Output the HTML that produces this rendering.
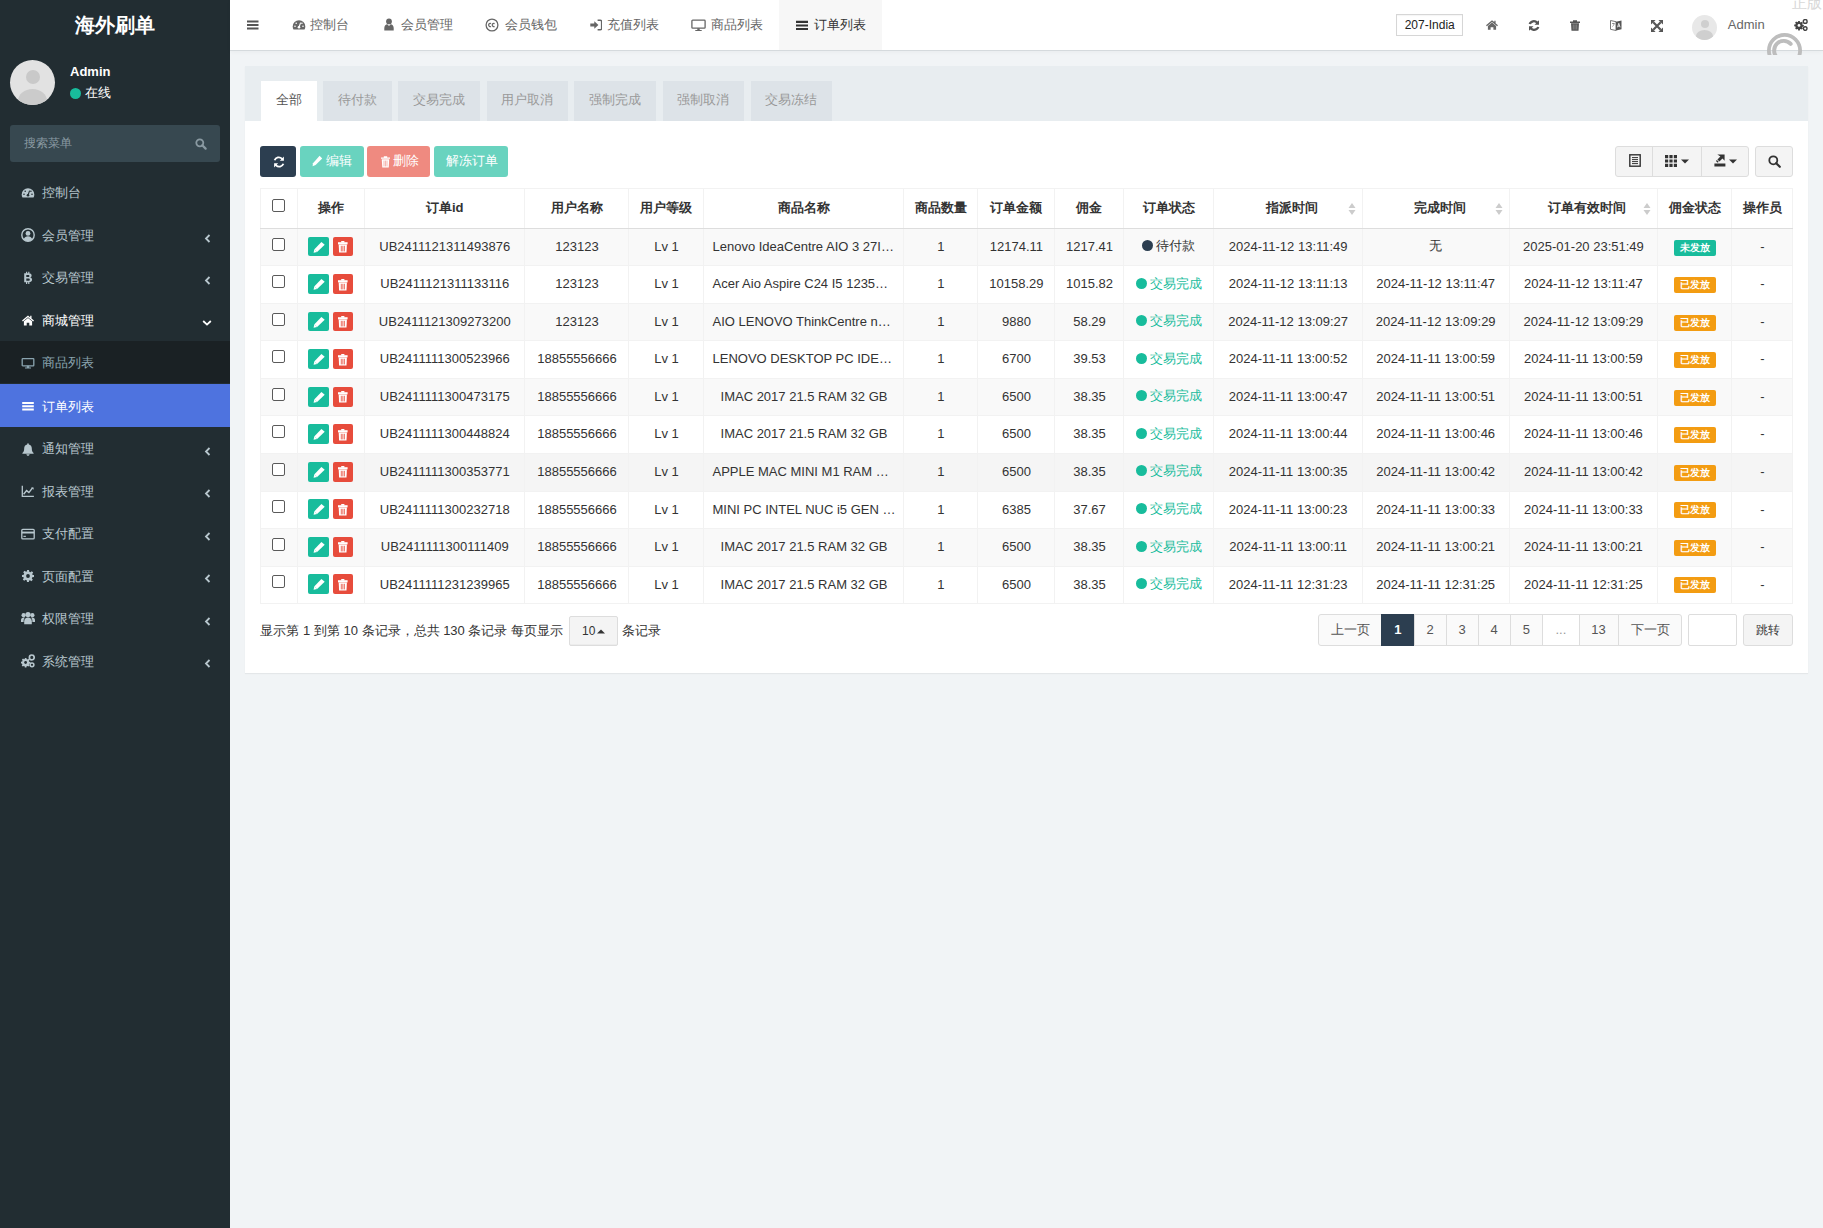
<!DOCTYPE html>
<html><head><meta charset="utf-8">
<style>
*{box-sizing:border-box;margin:0;padding:0}
html,body{width:1823px;height:1228px;overflow:hidden;background:#f1f4f6;font-family:"Liberation Sans",sans-serif;font-size:13px;color:#333}
.a{position:absolute}
svg{display:block}
#sb{position:absolute;left:0;top:0;width:230px;height:1228px;background:#222d32}
#logo{position:absolute;left:0;top:9px;width:230px;text-align:center;color:#fff;font-size:20px;font-weight:bold;line-height:32px}
.av{border-radius:50%;background:#e4e4e4;overflow:hidden}
.mi{position:absolute;left:0;width:230px;height:42.55px;color:#b8c7ce;font-size:13px}
.mi .t{position:absolute;left:42px;top:1.8px;line-height:42.55px}
.mi .ic{position:absolute;left:21px;top:15.2px}
.mi .ch{position:absolute;left:204px;top:20.5px}
#nav{position:absolute;left:230px;top:0;width:1593px;height:51px;background:#fff;border-bottom:1px solid #d5dadd;box-shadow:0 1px 4px rgba(0,0,0,.04)}
.nt{position:absolute;top:0;height:50px;line-height:49px;color:#666;font-size:13px}

#panel{position:absolute;left:245px;top:66px;width:1563px;height:607px;background:#fff;border-radius:0;box-shadow:0 1px 1px rgba(0,0,0,.05)}
#ph{position:absolute;left:0;top:0;width:1563px;height:55px;background:#e8edf0}
.tab{position:absolute;top:15px;height:40px;line-height:37px;text-align:center;background:#dde3e8;color:#999;font-size:13px}
.btn{position:absolute;top:80px;height:31px;border-radius:3px;color:#fff;font-size:13px;line-height:31px;text-align:center}
table{position:absolute;left:15px;top:121.5px;border-collapse:collapse;table-layout:fixed;width:1532.5px}
td,th{border:1px solid #f2f2f2;text-align:center;white-space:nowrap;overflow:hidden;text-overflow:ellipsis;font-size:13px;color:#333;padding:0 8px}
th{height:40.4px;font-weight:bold;border-bottom:1px solid #ddd}
td{height:37.52px;padding-bottom:1.5px}
tr.odd td{background:#f9f9f9}
tr.hov td{background:#f5f5f5}
.cb{display:inline-block;width:13px;height:13px;border:1px solid #5a5a5a;border-radius:2px;background:#fff;vertical-align:middle}
.eb{position:relative;display:inline-block;width:21.5px;height:19.6px;border-radius:2px;background:#18bc9c;vertical-align:middle;margin-right:4.2px;margin-left:-1px;margin-top:-1px}
.db{position:relative;display:inline-block;width:19.4px;height:19.6px;border-radius:2px;background:#e74c3c;vertical-align:middle;margin-top:-1px}
.dot{display:inline-block;width:11px;height:11px;border-radius:50%;vertical-align:-1px;margin-right:3px}
.lb{position:relative;top:1px;display:inline-block;height:16px;line-height:16px;padding:0 5.8px;font-size:9.75px;font-weight:bold;color:#fff;border-radius:2px;vertical-align:middle}
.sort{position:absolute;right:6px;top:13px}
.pg{position:absolute;top:548px;height:32px;line-height:30px;text-align:center;border:1px solid #ddd;background:#fafafa;color:#555;font-size:13px}
</style></head><body>
<div id="sb">
  <div id="logo">海外刷单</div>
  <div class="a av" style="left:10px;top:60px;width:45px;height:45px;background:#e2e2e2"><div class="a" style="left:15.5px;top:10px;width:14px;height:14px;border-radius:50%;background:#c9c9c9"></div><div class="a" style="left:8px;top:29px;width:29px;height:24px;border-radius:50%;background:#cbcbcb"></div></div>
  <div class="a" style="left:70px;top:62.5px;color:#fff;font-weight:bold;font-size:13px;line-height:18px">Admin</div>
  <div class="a" style="left:70px;top:88px;width:11px;height:11px;border-radius:50%;background:#18bc9c"></div>
  <div class="a" style="left:85px;top:84px;color:#fff;font-size:13px;line-height:18px">在线</div>
  <div class="a" style="left:10px;top:125px;width:210px;height:37px;background:#374850;border-radius:3px"></div>
  <div class="a" style="left:24px;top:135px;color:#8a9aa2;font-size:12px;line-height:16px">搜索菜单</div>

  <div class="a" style="left:195px;top:138px"><svg width="12" height="12" viewBox="0 0 12 12"><circle cx="4.8" cy="4.8" r="3.5" fill="none" stroke="#8a9aa2" stroke-width="1.8"/><path d="M7.3 7.3L10.6 10.6" stroke="#8a9aa2" stroke-width="2.2" stroke-linecap="round"/></svg></div>
  <div class="mi" style="top:170.70px;color:#b8c7ce"><div class="ic"><svg width="14" height="14" viewBox="0 0 14 14"><path d="M7 2.2A6.3 6.3 0 0 0 0.7 8.5c0 1.2.3 2.2.8 3.1h11c.5-.9.8-1.9.8-3.1A6.3 6.3 0 0 0 7 2.2z" fill="#b8c7ce"/><circle cx="7" cy="9.3" r="1.3" fill="#222d32"/><path d="M7 9.3L8.6 4.6" stroke="#222d32" stroke-width="1.1"/><circle cx="3" cy="8.2" r=".8" fill="#222d32"/><circle cx="4.2" cy="5.2" r=".8" fill="#222d32"/><circle cx="11" cy="8.2" r=".8" fill="#222d32"/><circle cx="9.9" cy="5.2" r=".8" fill="#222d32"/></svg></div><div class="t">控制台</div></div>
  <div class="mi" style="top:213.16px;color:#b8c7ce"><div class="ic"><svg width="14" height="14" viewBox="0 0 14 14"><circle cx="7" cy="7" r="6.2" fill="none" stroke="#b8c7ce" stroke-width="1.4"/><circle cx="7" cy="5.4" r="2.4" fill="#b8c7ce"/><path d="M2.6 11.2c.9-2 2.5-3 4.4-3s3.5 1 4.4 3c-1.1 1.2-2.7 1.9-4.4 1.9s-3.3-.7-4.4-1.9z" fill="#b8c7ce"/></svg></div><div class="t">会员管理</div><div class="ch"><svg width="8" height="9" viewBox="0 0 8 9" class="chev"><path d="M5.5 1L2 4.5 5.5 8" fill="none" stroke="#b8c7ce" stroke-width="1.8"/></svg></div></div>
  <div class="mi" style="top:255.62px;color:#b8c7ce"><div class="ic"><svg width="14" height="14" viewBox="0 0 14 14"><path d="M3.2 2.2h4.4c1.9 0 3 .9 3 2.3 0 .9-.5 1.6-1.3 1.9 1.1.3 1.8 1.1 1.8 2.2 0 1.7-1.3 2.7-3.3 2.7H3.2zM5.3 3.9v2h2c.7 0 1.1-.4 1.1-1s-.4-1-1.1-1zm0 3.6v2.3h2.2c.8 0 1.3-.4 1.3-1.15s-.5-1.15-1.3-1.15zM5 .8h1.2v1.6H5zm2.2 0h1.2v1.6H7.2zM5 11.1h1.2v1.8H5zm2.2 0h1.2v1.8H7.2z" fill="#b8c7ce"/></svg></div><div class="t">交易管理</div><div class="ch"><svg width="8" height="9" viewBox="0 0 8 9" class="chev"><path d="M5.5 1L2 4.5 5.5 8" fill="none" stroke="#b8c7ce" stroke-width="1.8"/></svg></div></div>
  <div class="mi" style="top:298.08px;color:#fff"><div class="ic"><svg width="14" height="14" viewBox="0 0 14 14"><path d="M7 2.5L1 7.6l.9 1L7 4.3l5.1 4.3.9-1L10.5 5.5V2.8H9.2v1.6z" fill="#fff"/><path d="M2.9 8.3L7 4.9l4.1 3.4v4.3H8.3V9.8H5.7v2.8H2.9z" fill="#fff"/></svg></div><div class="t">商城管理</div><div class="ch" style="left:202px;top:20.5px"><svg width="10" height="8" viewBox="0 0 10 8"><path d="M1.2 2L5 5.6 8.8 2" fill="none" stroke="#fff" stroke-width="1.8"/></svg></div></div>
  <div class="mi" style="top:340.54px;background:#1a2124;color:#8aa4af"><div class="ic"><svg width="14" height="14" viewBox="0 0 14 14"><rect x="1.2" y="2.6" width="11.6" height="7.2" rx=".6" fill="none" stroke="#8aa4af" stroke-width="1.3"/><path d="M5.8 9.8v1.6H4v1.1h6v-1.1H8.2V9.8" fill="#8aa4af"/></svg></div><div class="t">商品列表</div></div>
  <div class="mi" style="top:384.00px;background:#4e73df;color:#fff"><div class="ic"><svg width="14" height="14" viewBox="0 0 14 14"><path d="M1.2 3h11.6v2H1.2zm0 3.2h11.6v2H1.2zm0 3.2h11.6v2H1.2z" fill="#fff"/></svg></div><div class="t">订单列表</div></div>
  <div class="mi" style="top:426.46px;color:#b8c7ce"><div class="ic"><svg width="14" height="14" viewBox="0 0 14 14"><path d="M7 1.2c.5 0 .8.3.8.8v.4c1.9.4 3 1.9 3 3.9 0 2.6.6 3.8 1.8 4.6v.8H1.4v-.8c1.2-.8 1.8-2 1.8-4.6 0-2 1.1-3.5 3-3.9V2c0-.5.3-.8.8-.8zM5.4 12.2h3.2c0 .9-.7 1.5-1.6 1.5s-1.6-.6-1.6-1.5z" fill="#b8c7ce"/></svg></div><div class="t">通知管理</div><div class="ch"><svg width="8" height="9" viewBox="0 0 8 9" class="chev"><path d="M5.5 1L2 4.5 5.5 8" fill="none" stroke="#b8c7ce" stroke-width="1.8"/></svg></div></div>
  <div class="mi" style="top:468.92px;color:#b8c7ce"><div class="ic"><svg width="14" height="14" viewBox="0 0 14 14"><path d="M1.3 1.8v10.5h11.6" fill="none" stroke="#b8c7ce" stroke-width="1.3"/><path d="M2.6 10.2l3-3.6 2.3 2 3.7-4.8" fill="none" stroke="#b8c7ce" stroke-width="1.4"/><path d="M10.2 3.4h2.4v2.4z" fill="#b8c7ce"/></svg></div><div class="t">报表管理</div><div class="ch"><svg width="8" height="9" viewBox="0 0 8 9" class="chev"><path d="M5.5 1L2 4.5 5.5 8" fill="none" stroke="#b8c7ce" stroke-width="1.8"/></svg></div></div>
  <div class="mi" style="top:511.38px;color:#b8c7ce"><div class="ic"><svg width="14" height="14" viewBox="0 0 14 14"><rect x="0.8" y="2.3" width="12.4" height="9.6" rx="1" fill="none" stroke="#b8c7ce" stroke-width="1.3"/><rect x="0.8" y="4.6" width="12.4" height="1.9" fill="#b8c7ce"/><rect x="2.4" y="8.8" width="2.5" height="1.1" fill="#b8c7ce"/></svg></div><div class="t">支付配置</div><div class="ch"><svg width="8" height="9" viewBox="0 0 8 9" class="chev"><path d="M5.5 1L2 4.5 5.5 8" fill="none" stroke="#b8c7ce" stroke-width="1.8"/></svg></div></div>
  <div class="mi" style="top:553.84px;color:#b8c7ce"><div class="ic"><svg width="14" height="14" viewBox="0 0 14 14"><path d="M6 1h2l.3 1.7 1.1.5 1.4-1 1.4 1.4-1 1.4.5 1.1L13 6v2l-1.7.3-.5 1.1 1 1.4-1.4 1.4-1.4-1-1.1.5L8 13H6l-.3-1.7-1.1-.5-1.4 1-1.4-1.4 1-1.4-.5-1.1L1 8V6l1.7-.3.5-1.1-1-1.4 1.4-1.4 1.4 1 1.1-.5z" fill="#b8c7ce"/><circle cx="7" cy="7" r="1.9" fill="#222d32"/></svg></div><div class="t">页面配置</div><div class="ch"><svg width="8" height="9" viewBox="0 0 8 9" class="chev"><path d="M5.5 1L2 4.5 5.5 8" fill="none" stroke="#b8c7ce" stroke-width="1.8"/></svg></div></div>
  <div class="mi" style="top:596.30px;color:#b8c7ce"><div class="ic"><svg width="14" height="14" viewBox="0 0 14 14"><circle cx="7" cy="3.6" r="2.6" fill="#b8c7ce"/><circle cx="2.6" cy="4.2" r="2.1" fill="#b8c7ce"/><circle cx="11.4" cy="4.2" r="2.1" fill="#b8c7ce"/><path d="M3.2 13.2v-3c0-2.2 1.7-3.6 3.8-3.6s3.8 1.4 3.8 3.6v3z" fill="#b8c7ce"/><path d="M0 11V9.2c0-1.8 1.1-2.7 2.6-2.7.6 0 1 .1 1.4.3-.9.7-1.4 1.8-1.4 3.2V11zM14 11V9.2c0-1.8-1.1-2.7-2.6-2.7-.6 0-1 .1-1.4.3.9.7 1.4 1.8 1.4 3.2V11z" fill="#b8c7ce"/></svg></div><div class="t">权限管理</div><div class="ch"><svg width="8" height="9" viewBox="0 0 8 9" class="chev"><path d="M5.5 1L2 4.5 5.5 8" fill="none" stroke="#b8c7ce" stroke-width="1.8"/></svg></div></div>
  <div class="mi" style="top:638.76px;color:#b8c7ce"><div class="ic"><svg width="14" height="14" viewBox="0 0 14 14"><path d="M3.8 3.9h1.6l.2 1.2.8.4 1-.7 1.1 1.1-.7 1 .4.8 1.2.2v1.6l-1.2.2-.4.8.7 1-1.1 1.1-1-.7-.8.4-.2 1.2H3.8l-.2-1.2-.8-.4-1 .7-1.1-1.1.7-1-.4-.8L0 9.3V7.7l1.2-.2.4-.8-.7-1L2 4.6l1 .7.8-.4z" fill="#b8c7ce"/><circle cx="4.6" cy="8.5" r="1.4" fill="#222d32"/><circle cx="10.8" cy="3.4" r="2.4" fill="none" stroke="#b8c7ce" stroke-width="1.7"/><circle cx="11" cy="10.8" r="1.9" fill="none" stroke="#b8c7ce" stroke-width="1.5"/></svg></div><div class="t">系统管理</div><div class="ch"><svg width="8" height="9" viewBox="0 0 8 9" class="chev"><path d="M5.5 1L2 4.5 5.5 8" fill="none" stroke="#b8c7ce" stroke-width="1.8"/></svg></div></div>
</div>
<div id="nav">
  <div class="a" style="left:17px;top:20px"><svg width="12" height="10" viewBox="0 0 12 10"><path d="M0 0.5h11.5v2H0zm0 3.5h11.5v2H0zm0 3.5h11.5v2H0z" fill="#555"/></svg></div>
  <div class="a" style="left:61.8px;top:18px"><svg width="14" height="14" viewBox="0 0 14 14"><path d="M7 2.2A6.3 6.3 0 0 0 0.7 8.5c0 1.2.3 2.2.8 3.1h11c.5-.9.8-1.9.8-3.1A6.3 6.3 0 0 0 7 2.2z" fill="#666"/><circle cx="7" cy="9.3" r="1.3" fill="#fff"/><path d="M7 9.3L8.6 4.6" stroke="#fff" stroke-width="1.1"/><circle cx="3" cy="8.2" r=".8" fill="#fff"/><circle cx="4.2" cy="5.2" r=".8" fill="#fff"/><circle cx="11" cy="8.2" r=".8" fill="#fff"/><circle cx="9.9" cy="5.2" r=".8" fill="#fff"/></svg></div>
  <div class="nt" style="left:80px">控制台</div>
  <div class="a" style="left:154px;top:18px"><svg width="10" height="13" viewBox="0 0 10 13"><circle cx="5" cy="3.4" r="2.9" fill="#666"/><path d="M0.3 12.4V10c0-2.3 1.6-3.6 3-3.8L5 8l1.7-1.8c1.4.2 3 1.5 3 3.8v2.4z" fill="#666"/></svg></div>
  <div class="nt" style="left:171.4px">会员管理</div>
  <div class="a" style="left:255px;top:18px"><svg width="14" height="14" viewBox="0 0 14 14"><circle cx="7" cy="7" r="5.9" fill="none" stroke="#666" stroke-width="1.3"/><path d="M6 5.6a1.6 1.6 0 1 0 0 2.8M9.6 5.6a1.6 1.6 0 1 0 0 2.8" fill="none" stroke="#666" stroke-width="1.2"/></svg></div>
  <div class="nt" style="left:274.5px">会员钱包</div>
  <div class="a" style="left:359.8px;top:19px"><svg width="12" height="12" viewBox="0 0 12 12"><path d="M0.3 4.6h4V2.3L8.4 6 4.3 9.7V7.4h-4z" fill="#666"/><path d="M7.6 1.2h2.6c.8 0 1.4.6 1.4 1.4v6.8c0 .8-.6 1.4-1.4 1.4H7.6" fill="none" stroke="#666" stroke-width="1.4"/></svg></div>
  <div class="nt" style="left:377.4px">充值列表</div>
  <div class="a" style="left:461px;top:18.5px"><svg width="15" height="13" viewBox="0 0 15 13"><rect x="0.9" y="1.2" width="13.2" height="8" rx=".8" fill="none" stroke="#666" stroke-width="1.3"/><path d="M6.3 9.2v1.8H4.3v1.1h6.4v-1.1H8.7V9.2" fill="#666"/></svg></div>
  <div class="nt" style="left:481px">商品列表</div>
  <div class="a" style="left:548.8px;top:0;width:103px;height:50px;background:#f7f7f7"></div>
  <div class="a" style="left:566px;top:19.5px"><svg width="12" height="11" viewBox="0 0 12 11"><path d="M0 0.8h12v2.1H0zm0 3.6h12v2.1H0zm0 3.6h12v2.1H0z" fill="#333"/></svg></div>
  <div class="nt" style="left:584px;color:#333">订单列表</div>

  <div class="a" style="left:1166.3px;top:14.2px;width:66.3px;height:21.5px;border:1px solid #d6d6d6;background:#fff;box-shadow:inset 0 1px 1px rgba(0,0,0,.04)"></div>
  <div class="a" style="left:1174.7px;top:14px;line-height:22px;font-size:12px;color:#222">207-India</div>
  <div class="a" style="left:1256px;top:20px"><svg width="12" height="10" viewBox="0 0 12 10"><path d="M6 0.2L0 5.2l.9 1L6 1.9l5.1 4.3.9-1L9.6 3.2V0.8H8.3v1.3z" fill="#666"/><path d="M1.9 5.9L6 2.5l4.1 3.4v3.9H7.4V7.3H4.6v2.5H1.9z" fill="#666"/></svg></div>
  <div class="a" style="left:1298px;top:20px"><svg width="12" height="11" viewBox="0 0 12 11"><path d="M11 0.3v4.5H6.5l1.6-1.6A3.4 3.4 0 0 0 2.8 4.3L.6 3.7A5.6 5.6 0 0 1 9.7 1.6z" fill="#555"/><path d="M1 10.7V6.2h4.5L3.9 7.8a3.4 3.4 0 0 0 5.3-1.1l2.2.6a5.6 5.6 0 0 1-9.1 2.1z" fill="#555"/></svg></div>
  <div class="a" style="left:1340px;top:20px"><svg width="10" height="11" viewBox="0 0 10 11"><path d="M0 1.5h10v1.6H0zM3 0.2h4v1.8H3z" fill="#555"/><path d="M1 3.3h8l-.5 7.5H1.5z" fill="#555"/><path d="M3.3 4.5v5M5 4.5v5M6.7 4.5v5" stroke="#999" stroke-width=".7"/></svg></div>
  <div class="a" style="left:1380.4px;top:19px"><svg width="12" height="13" viewBox="0 0 12 13"><path d="M0.5 1.5l5.5 1.2v8.8L0.5 10.3z" fill="none" stroke="#777" stroke-width="1"/><path d="M6 2.7l5.5-1.2v8.8L6 11.5z" fill="#555"/><path d="M7.5 8.3l1.3-4 1.3 4M7.9 7.1h1.8" fill="none" stroke="#fff" stroke-width=".8"/><path d="M2 4.5h2.6M3.3 4v1M2.3 7.5c1-.6 1.8-1.6 2-3" fill="none" stroke="#777" stroke-width=".7"/></svg></div>
  <div class="a" style="left:1420.7px;top:19.6px"><svg width="12" height="12" viewBox="0 0 12 12"><path d="M2.3 2.3L9.7 9.7M9.7 2.3L2.3 9.7" stroke="#555" stroke-width="2.2"/><path d="M0 0h4.6L0 4.6zM12 0v4.6L7.4 0zM12 12H7.4L12 7.4zM0 12V7.4L4.6 12z" fill="#555"/></svg></div>
  <div class="a av" style="left:1462px;top:14.7px;width:25px;height:25px;background:#e8e8e8"><div class="a" style="left:8.5px;top:5px;width:8px;height:8px;border-radius:50%;background:#cfcfcf"></div><div class="a" style="left:4px;top:15px;width:17px;height:12px;border-radius:50%;background:#cfcfcf"></div></div>
  <div class="a" style="left:1497.8px;top:16px;line-height:18px;font-size:13px;color:#666">Admin</div>
  <div class="a" style="left:1563.8px;top:19px"><svg width="14" height="12" viewBox="0 0 14 12"><path d="M3.8 2.7h1.6l.2 1.2.8.4 1-.7 1.1 1.1-.7 1 .4.8 1.2.2v1.6l-1.2.2-.4.8.7 1-1.1 1.1-1-.7-.8.4-.2 1.2H3.8l-.2-1.2-.8-.4-1 .7L.7 10l.7-1-.4-.8L-.2 8V6.4L1 6.2l.4-.8-.7-1 1.1-1.1 1 .7.8-.4z" fill="#444" transform="translate(.4 -.8)"/><circle cx="5" cy="6.4" r="1.4" fill="#fff"/><circle cx="11.2" cy="2.4" r="1.9" fill="none" stroke="#444" stroke-width="1.4"/><circle cx="11.2" cy="9.6" r="1.8" fill="none" stroke="#444" stroke-width="1.4"/></svg></div>
  <div class="a" style="left:1562px;top:-6.5px;font-size:15px;line-height:18px;color:#d8d8d8;letter-spacing:0">正版</div>
  <div class="a" style="left:1537px;top:33px;width:35px;height:22px;overflow:visible"><svg width="35" height="22" viewBox="0 0 35 22" style="overflow:hidden"><circle cx="17.5" cy="17.5" r="15.6" fill="none" stroke="#bdbdbd" stroke-width="3.8"/><path d="M23.67 10.9A9.6 9.6 0 1 0 23.67 24.1" fill="none" stroke="#bdbdbd" stroke-width="3.9" stroke-linecap="round"/></svg></div>
</div>
<div id="panel">
  <div id="ph">
    <div class="tab" style="left:16px;width:56.3px;background:#fff;color:#555">全部</div>
    <div class="tab" style="left:78.4px;width:68.3px">待付款</div>
    <div class="tab" style="left:153.4px;width:81.3px">交易完成</div>
    <div class="tab" style="left:241.5px;width:81.5px">用户取消</div>
    <div class="tab" style="left:329.2px;width:81.8px">强制完成</div>
    <div class="tab" style="left:417.6px;width:81.2px">强制取消</div>
    <div class="tab" style="left:505.9px;width:81.1px">交易冻结</div>
  </div>
  <div class="btn" style="left:15px;width:36px;background:#2c3e50"></div>
  <div class="a" style="left:27.5px;top:89.5px"><svg width="12" height="12" viewBox="0 0 12 12"><path d="M10.9 0.6v4.1H6.8l1.5-1.5A3.6 3.6 0 0 0 2.5 4.4L.7 3.9A5.5 5.5 0 0 1 9.6 2z" fill="#fff"/><path d="M1.1 11.4V7.3h4.1L3.7 8.8a3.6 3.6 0 0 0 5.8-1.2l1.8.5A5.5 5.5 0 0 1 2.4 10z" fill="#fff"/></svg></div>
  <div class="btn" style="left:55px;width:63.8px;background:#18bc9c;opacity:.65"></div>
  <div class="a" style="left:67px;top:89px"><svg width="11" height="12" viewBox="0 0 11 12"><path d="M7.6 0.8l2.6 2.6-6.6 6.6L.6 11.2 1 8.2z" fill="#fff"/></svg></div>
  <div class="a" style="left:81px;top:79.5px;line-height:29px;color:#fff">编辑</div>
  <div class="btn" style="left:122.1px;width:62.9px;background:#e74c3c;opacity:.65"></div>
  <div class="a" style="left:135.5px;top:89.5px"><svg width="9" height="12" viewBox="0 0 9 12"><path d="M0 1.6h9v1.2H0zM2.8 0.2h3.4v1.6H2.8z" fill="#fff"/><path d="M.8 3.3h7.4l-.5 8.3H1.3z" fill="#fff"/><path d="M3 4.6v5.8M4.5 4.6v5.8M6 4.6v5.8" stroke="#f09b92" stroke-width=".7"/></svg></div>
  <div class="a" style="left:147.5px;top:79.5px;line-height:29px;color:#fff">删除</div>
  <div class="btn" style="left:189px;width:73.8px;background:#18bc9c;opacity:.65"></div>
  <div class="a" style="left:201.3px;top:79.5px;line-height:29px;color:#fff">解冻订单</div>
  <div class="a" style="left:1370.3px;top:80px;width:134.2px;height:30.5px;border:1px solid #ddd;border-radius:3px;background:#f4f4f4"></div>
  <div class="a" style="left:1407px;top:80px;width:1px;height:30.5px;background:#ddd"></div>
  <div class="a" style="left:1456px;top:80px;width:1px;height:30.5px;background:#ddd"></div>
  <div class="a" style="left:1510px;top:80px;width:37.6px;height:30.5px;border:1px solid #ddd;border-radius:3px;background:#f4f4f4"></div>
  <div class="a" style="left:1384px;top:87.8px"><svg width="12" height="13" viewBox="0 0 12 13"><rect x="0.8" y="0.8" width="10.4" height="11.4" fill="none" stroke="#333" stroke-width="1.4"/><path d="M3 3.6h6M3 5.6h6M3 7.6h6M3 9.6h6" stroke="#333" stroke-width="1"/></svg></div>
  <div class="a" style="left:1419.8px;top:88.6px"><svg width="12" height="12" viewBox="0 0 12 12"><path d="M0 0h3.2v3.2H0zm4.4 0h3.2v3.2H4.4zm4.4 0H12v3.2H8.8zM0 4.4h3.2v3.2H0zm4.4 0h3.2v3.2H4.4zm4.4 0H12v3.2H8.8zM0 8.8h3.2V12H0zm4.4 0h3.2V12H4.4zm4.4 0H12V12H8.8z" fill="#333"/></svg></div>
  <div class="a" style="left:1436px;top:92.5px"><svg width="8" height="5" viewBox="0 0 8 5"><path d="M0 0.5h8L4 4.6z" fill="#333"/></svg></div>
  <div class="a" style="left:1468.5px;top:87.5px"><svg width="12" height="13" viewBox="0 0 12 13"><path d="M0.4 9.5h11v3H.4z" fill="#333"/><path d="M3.3 0.4h7.3v6.3L8.5 4.6 5.4 7.6 3.4 5.6 6.4 2.5z" fill="#333"/><path d="M2.4 6.5l1.8 1.8" stroke="#333" stroke-width="1.3"/></svg></div>
  <div class="a" style="left:1484px;top:92.5px"><svg width="8" height="5" viewBox="0 0 8 5"><path d="M0 0.5h8L4 4.6z" fill="#333"/></svg></div>
  <div class="a" style="left:1523px;top:88.5px"><svg width="13" height="13" viewBox="0 0 13 13"><circle cx="5.3" cy="5.3" r="4" fill="none" stroke="#333" stroke-width="1.8"/><path d="M8.2 8.2l3.6 3.6" stroke="#333" stroke-width="2.2" stroke-linecap="round"/></svg></div>
  <table><colgroup><col style="width:36.6px"><col style="width:67.4px"><col style="width:160.5px"><col style="width:104px"><col style="width:75px"><col style="width:200px"><col style="width:74px"><col style="width:77px"><col style="width:69px"><col style="width:90px"><col style="width:148.4px"><col style="width:146.7px"><col style="width:148.8px"><col style="width:74px"><col style="width:61px"></colgroup>
<tr>
<th style="padding:0"><span class="cb" style="margin-top:-7px"></span></th>
<th>操作</th>
<th>订单id</th>
<th>用户名称</th>
<th>用户等级</th>
<th>商品名称</th>
<th>商品数量</th>
<th>订单金额</th>
<th>佣金</th>
<th>订单状态</th>
<th style="position:relative;padding-left:16px">指派时间<span class="sort"><svg width="8" height="14" viewBox="0 0 8 14"><path d="M4 1L7.5 6H.5zM4 13L.5 8h7z" fill="#ccc"/></svg></span></th>
<th style="position:relative;padding-left:16px">完成时间<span class="sort"><svg width="8" height="14" viewBox="0 0 8 14"><path d="M4 1L7.5 6H.5zM4 13L.5 8h7z" fill="#ccc"/></svg></span></th>
<th style="position:relative;padding-left:16px">订单有效时间<span class="sort"><svg width="8" height="14" viewBox="0 0 8 14"><path d="M4 1L7.5 6H.5zM4 13L.5 8h7z" fill="#ccc"/></svg></span></th>
<th>佣金状态</th>
<th>操作员</th>
</tr>
<tr class="odd"><td style="padding:0"><span class="cb" style="margin-top:-8px"></span></td><td style="padding:0"><span class="eb"><svg width="12" height="12" viewBox="0 0 12 12" style="position:absolute;left:5px;top:4px"><path d="M8.4 0.9L11.7 3.8 4.1 11.1 1.2 8.4z" fill="#fff"/><path d="M1.2 8.4L4.1 11.1 0.6 11.7z" fill="#fff"/></svg></span><span class="db"><svg width="10" height="12" viewBox="0 0 10 12" style="position:absolute;left:5px;top:4.5px"><path d="M3.2 0h3.2v1.6H3.2z" fill="#fff"/><path d="M0 1.2h9.6v2.2H0z" fill="#fff"/><path d="M0.7 3.4h8.2l-.4 8.2H1.1z" fill="#fff"/><path d="M3.3 4.8v5.6M4.85 4.8v5.6M6.4 4.8v5.6" stroke="#e74c3c" stroke-width=".8"/></svg></span></td><td>UB2411121311493876</td><td>123123</td><td>Lv 1</td><td>Lenovo IdeaCentre AIO 3 27IAP7 Core i5</td><td>1</td><td>12174.11</td><td>1217.41</td><td><span class="dot" style="background:#2c3e50"></span>待付款</td><td>2024-11-12 13:11:49</td><td>无</td><td>2025-01-20 23:51:49</td><td><span class="lb" style="background:#18bc9c">未发放</span></td><td>-</td></tr>
<tr class=""><td style="padding:0"><span class="cb" style="margin-top:-8px"></span></td><td style="padding:0"><span class="eb"><svg width="12" height="12" viewBox="0 0 12 12" style="position:absolute;left:5px;top:4px"><path d="M8.4 0.9L11.7 3.8 4.1 11.1 1.2 8.4z" fill="#fff"/><path d="M1.2 8.4L4.1 11.1 0.6 11.7z" fill="#fff"/></svg></span><span class="db"><svg width="10" height="12" viewBox="0 0 10 12" style="position:absolute;left:5px;top:4.5px"><path d="M3.2 0h3.2v1.6H3.2z" fill="#fff"/><path d="M0 1.2h9.6v2.2H0z" fill="#fff"/><path d="M0.7 3.4h8.2l-.4 8.2H1.1z" fill="#fff"/><path d="M3.3 4.8v5.6M4.85 4.8v5.6M6.4 4.8v5.6" stroke="#e74c3c" stroke-width=".8"/></svg></span></td><td>UB2411121311133116</td><td>123123</td><td>Lv 1</td><td>Acer Aio Aspire C24 I5 1235U 16GB</td><td>1</td><td>10158.29</td><td>1015.82</td><td><span style="color:#18bc9c"><span class="dot" style="background:#18bc9c"></span>交易完成</span></td><td>2024-11-12 13:11:13</td><td>2024-11-12 13:11:47</td><td>2024-11-12 13:11:47</td><td><span class="lb" style="background:#f39c12">已发放</span></td><td>-</td></tr>
<tr class="odd"><td style="padding:0"><span class="cb" style="margin-top:-8px"></span></td><td style="padding:0"><span class="eb"><svg width="12" height="12" viewBox="0 0 12 12" style="position:absolute;left:5px;top:4px"><path d="M8.4 0.9L11.7 3.8 4.1 11.1 1.2 8.4z" fill="#fff"/><path d="M1.2 8.4L4.1 11.1 0.6 11.7z" fill="#fff"/></svg></span><span class="db"><svg width="10" height="12" viewBox="0 0 10 12" style="position:absolute;left:5px;top:4.5px"><path d="M3.2 0h3.2v1.6H3.2z" fill="#fff"/><path d="M0 1.2h9.6v2.2H0z" fill="#fff"/><path d="M0.7 3.4h8.2l-.4 8.2H1.1z" fill="#fff"/><path d="M3.3 4.8v5.6M4.85 4.8v5.6M6.4 4.8v5.6" stroke="#e74c3c" stroke-width=".8"/></svg></span></td><td>UB2411121309273200</td><td>123123</td><td>Lv 1</td><td>AIO LENOVO ThinkCentre neo 50a</td><td>1</td><td>9880</td><td>58.29</td><td><span style="color:#18bc9c"><span class="dot" style="background:#18bc9c"></span>交易完成</span></td><td>2024-11-12 13:09:27</td><td>2024-11-12 13:09:29</td><td>2024-11-12 13:09:29</td><td><span class="lb" style="background:#f39c12">已发放</span></td><td>-</td></tr>
<tr class=""><td style="padding:0"><span class="cb" style="margin-top:-8px"></span></td><td style="padding:0"><span class="eb"><svg width="12" height="12" viewBox="0 0 12 12" style="position:absolute;left:5px;top:4px"><path d="M8.4 0.9L11.7 3.8 4.1 11.1 1.2 8.4z" fill="#fff"/><path d="M1.2 8.4L4.1 11.1 0.6 11.7z" fill="#fff"/></svg></span><span class="db"><svg width="10" height="12" viewBox="0 0 10 12" style="position:absolute;left:5px;top:4.5px"><path d="M3.2 0h3.2v1.6H3.2z" fill="#fff"/><path d="M0 1.2h9.6v2.2H0z" fill="#fff"/><path d="M0.7 3.4h8.2l-.4 8.2H1.1z" fill="#fff"/><path d="M3.3 4.8v5.6M4.85 4.8v5.6M6.4 4.8v5.6" stroke="#e74c3c" stroke-width=".8"/></svg></span></td><td>UB2411111300523966</td><td>18855556666</td><td>Lv 1</td><td>LENOVO DESKTOP PC IDEACENTRE</td><td>1</td><td>6700</td><td>39.53</td><td><span style="color:#18bc9c"><span class="dot" style="background:#18bc9c"></span>交易完成</span></td><td>2024-11-11 13:00:52</td><td>2024-11-11 13:00:59</td><td>2024-11-11 13:00:59</td><td><span class="lb" style="background:#f39c12">已发放</span></td><td>-</td></tr>
<tr class="odd"><td style="padding:0"><span class="cb" style="margin-top:-8px"></span></td><td style="padding:0"><span class="eb"><svg width="12" height="12" viewBox="0 0 12 12" style="position:absolute;left:5px;top:4px"><path d="M8.4 0.9L11.7 3.8 4.1 11.1 1.2 8.4z" fill="#fff"/><path d="M1.2 8.4L4.1 11.1 0.6 11.7z" fill="#fff"/></svg></span><span class="db"><svg width="10" height="12" viewBox="0 0 10 12" style="position:absolute;left:5px;top:4.5px"><path d="M3.2 0h3.2v1.6H3.2z" fill="#fff"/><path d="M0 1.2h9.6v2.2H0z" fill="#fff"/><path d="M0.7 3.4h8.2l-.4 8.2H1.1z" fill="#fff"/><path d="M3.3 4.8v5.6M4.85 4.8v5.6M6.4 4.8v5.6" stroke="#e74c3c" stroke-width=".8"/></svg></span></td><td>UB2411111300473175</td><td>18855556666</td><td>Lv 1</td><td>IMAC 2017 21.5 RAM 32 GB</td><td>1</td><td>6500</td><td>38.35</td><td><span style="color:#18bc9c"><span class="dot" style="background:#18bc9c"></span>交易完成</span></td><td>2024-11-11 13:00:47</td><td>2024-11-11 13:00:51</td><td>2024-11-11 13:00:51</td><td><span class="lb" style="background:#f39c12">已发放</span></td><td>-</td></tr>
<tr class=""><td style="padding:0"><span class="cb" style="margin-top:-8px"></span></td><td style="padding:0"><span class="eb"><svg width="12" height="12" viewBox="0 0 12 12" style="position:absolute;left:5px;top:4px"><path d="M8.4 0.9L11.7 3.8 4.1 11.1 1.2 8.4z" fill="#fff"/><path d="M1.2 8.4L4.1 11.1 0.6 11.7z" fill="#fff"/></svg></span><span class="db"><svg width="10" height="12" viewBox="0 0 10 12" style="position:absolute;left:5px;top:4.5px"><path d="M3.2 0h3.2v1.6H3.2z" fill="#fff"/><path d="M0 1.2h9.6v2.2H0z" fill="#fff"/><path d="M0.7 3.4h8.2l-.4 8.2H1.1z" fill="#fff"/><path d="M3.3 4.8v5.6M4.85 4.8v5.6M6.4 4.8v5.6" stroke="#e74c3c" stroke-width=".8"/></svg></span></td><td>UB2411111300448824</td><td>18855556666</td><td>Lv 1</td><td>IMAC 2017 21.5 RAM 32 GB</td><td>1</td><td>6500</td><td>38.35</td><td><span style="color:#18bc9c"><span class="dot" style="background:#18bc9c"></span>交易完成</span></td><td>2024-11-11 13:00:44</td><td>2024-11-11 13:00:46</td><td>2024-11-11 13:00:46</td><td><span class="lb" style="background:#f39c12">已发放</span></td><td>-</td></tr>
<tr class="hov"><td style="padding:0"><span class="cb" style="margin-top:-8px"></span></td><td style="padding:0"><span class="eb"><svg width="12" height="12" viewBox="0 0 12 12" style="position:absolute;left:5px;top:4px"><path d="M8.4 0.9L11.7 3.8 4.1 11.1 1.2 8.4z" fill="#fff"/><path d="M1.2 8.4L4.1 11.1 0.6 11.7z" fill="#fff"/></svg></span><span class="db"><svg width="10" height="12" viewBox="0 0 10 12" style="position:absolute;left:5px;top:4.5px"><path d="M3.2 0h3.2v1.6H3.2z" fill="#fff"/><path d="M0 1.2h9.6v2.2H0z" fill="#fff"/><path d="M0.7 3.4h8.2l-.4 8.2H1.1z" fill="#fff"/><path d="M3.3 4.8v5.6M4.85 4.8v5.6M6.4 4.8v5.6" stroke="#e74c3c" stroke-width=".8"/></svg></span></td><td>UB2411111300353771</td><td>18855556666</td><td>Lv 1</td><td>APPLE MAC MINI M1 RAM 16GB</td><td>1</td><td>6500</td><td>38.35</td><td><span style="color:#18bc9c"><span class="dot" style="background:#18bc9c"></span>交易完成</span></td><td>2024-11-11 13:00:35</td><td>2024-11-11 13:00:42</td><td>2024-11-11 13:00:42</td><td><span class="lb" style="background:#f39c12">已发放</span></td><td>-</td></tr>
<tr class=""><td style="padding:0"><span class="cb" style="margin-top:-8px"></span></td><td style="padding:0"><span class="eb"><svg width="12" height="12" viewBox="0 0 12 12" style="position:absolute;left:5px;top:4px"><path d="M8.4 0.9L11.7 3.8 4.1 11.1 1.2 8.4z" fill="#fff"/><path d="M1.2 8.4L4.1 11.1 0.6 11.7z" fill="#fff"/></svg></span><span class="db"><svg width="10" height="12" viewBox="0 0 10 12" style="position:absolute;left:5px;top:4.5px"><path d="M3.2 0h3.2v1.6H3.2z" fill="#fff"/><path d="M0 1.2h9.6v2.2H0z" fill="#fff"/><path d="M0.7 3.4h8.2l-.4 8.2H1.1z" fill="#fff"/><path d="M3.3 4.8v5.6M4.85 4.8v5.6M6.4 4.8v5.6" stroke="#e74c3c" stroke-width=".8"/></svg></span></td><td>UB2411111300232718</td><td>18855556666</td><td>Lv 1</td><td>MINI PC INTEL NUC i5 GEN 8 16GB</td><td>1</td><td>6385</td><td>37.67</td><td><span style="color:#18bc9c"><span class="dot" style="background:#18bc9c"></span>交易完成</span></td><td>2024-11-11 13:00:23</td><td>2024-11-11 13:00:33</td><td>2024-11-11 13:00:33</td><td><span class="lb" style="background:#f39c12">已发放</span></td><td>-</td></tr>
<tr class="odd"><td style="padding:0"><span class="cb" style="margin-top:-8px"></span></td><td style="padding:0"><span class="eb"><svg width="12" height="12" viewBox="0 0 12 12" style="position:absolute;left:5px;top:4px"><path d="M8.4 0.9L11.7 3.8 4.1 11.1 1.2 8.4z" fill="#fff"/><path d="M1.2 8.4L4.1 11.1 0.6 11.7z" fill="#fff"/></svg></span><span class="db"><svg width="10" height="12" viewBox="0 0 10 12" style="position:absolute;left:5px;top:4.5px"><path d="M3.2 0h3.2v1.6H3.2z" fill="#fff"/><path d="M0 1.2h9.6v2.2H0z" fill="#fff"/><path d="M0.7 3.4h8.2l-.4 8.2H1.1z" fill="#fff"/><path d="M3.3 4.8v5.6M4.85 4.8v5.6M6.4 4.8v5.6" stroke="#e74c3c" stroke-width=".8"/></svg></span></td><td>UB2411111300111409</td><td>18855556666</td><td>Lv 1</td><td>IMAC 2017 21.5 RAM 32 GB</td><td>1</td><td>6500</td><td>38.35</td><td><span style="color:#18bc9c"><span class="dot" style="background:#18bc9c"></span>交易完成</span></td><td>2024-11-11 13:00:11</td><td>2024-11-11 13:00:21</td><td>2024-11-11 13:00:21</td><td><span class="lb" style="background:#f39c12">已发放</span></td><td>-</td></tr>
<tr class=""><td style="padding:0"><span class="cb" style="margin-top:-8px"></span></td><td style="padding:0"><span class="eb"><svg width="12" height="12" viewBox="0 0 12 12" style="position:absolute;left:5px;top:4px"><path d="M8.4 0.9L11.7 3.8 4.1 11.1 1.2 8.4z" fill="#fff"/><path d="M1.2 8.4L4.1 11.1 0.6 11.7z" fill="#fff"/></svg></span><span class="db"><svg width="10" height="12" viewBox="0 0 10 12" style="position:absolute;left:5px;top:4.5px"><path d="M3.2 0h3.2v1.6H3.2z" fill="#fff"/><path d="M0 1.2h9.6v2.2H0z" fill="#fff"/><path d="M0.7 3.4h8.2l-.4 8.2H1.1z" fill="#fff"/><path d="M3.3 4.8v5.6M4.85 4.8v5.6M6.4 4.8v5.6" stroke="#e74c3c" stroke-width=".8"/></svg></span></td><td>UB2411111231239965</td><td>18855556666</td><td>Lv 1</td><td>IMAC 2017 21.5 RAM 32 GB</td><td>1</td><td>6500</td><td>38.35</td><td><span style="color:#18bc9c"><span class="dot" style="background:#18bc9c"></span>交易完成</span></td><td>2024-11-11 12:31:23</td><td>2024-11-11 12:31:25</td><td>2024-11-11 12:31:25</td><td><span class="lb" style="background:#f39c12">已发放</span></td><td>-</td></tr>
</table>
  <div class="a" style="left:15.4px;top:556px;line-height:18px;color:#333">显示第 1 到第 10 条记录，总共 130 条记录 每页显示</div>
  <div class="a" style="left:323.5px;top:550.3px;width:49.3px;height:30.1px;border:1px solid #ddd;border-radius:2px;background:#f4f4f4;box-shadow:inset 0 -1px 0 rgba(0,0,0,.03)"></div>
  <div class="a" style="left:337px;top:556px;line-height:18px;color:#333;font-size:12px">10</div>
  <div class="a" style="left:352px;top:563px"><svg width="8" height="5" viewBox="0 0 8 5"><path d="M0 4.5L4 0.5 8 4.5z" fill="#333"/></svg></div>
  <div class="a" style="left:377.2px;top:556px;line-height:18px;color:#333">条记录</div>
  <div class="pg" style="left:1073.2px;width:63.7px;border-radius:3px 0 0 3px;">上一页</div>
  <div class="pg" style="left:1135.9px;width:33.9px;background:#2c3e50;border-color:#2c3e50;color:#fff;font-weight:bold;">1</div>
  <div class="pg" style="left:1168.8px;width:32.8px;">2</div>
  <div class="pg" style="left:1200.6px;width:33.1px;">3</div>
  <div class="pg" style="left:1232.7px;width:33.1px;">4</div>
  <div class="pg" style="left:1264.8px;width:33.3px;">5</div>
  <div class="pg" style="left:1297.1px;width:37.5px;background:#fff;color:#999;">...</div>
  <div class="pg" style="left:1333.6px;width:40.0px;">13</div>
  <div class="pg" style="left:1372.6px;width:64.9px;border-radius:0 3px 3px 0;">下一页</div>
  <div class="pg" style="left:1443px;width:49.3px;background:#fff;border-color:#ddd;border-radius:2px"></div>
  <div class="pg" style="left:1498.4px;width:49.3px;background:#f4f4f4;border-radius:3px;color:#333;font-size:12px">跳转</div>
</div>
</body></html>
